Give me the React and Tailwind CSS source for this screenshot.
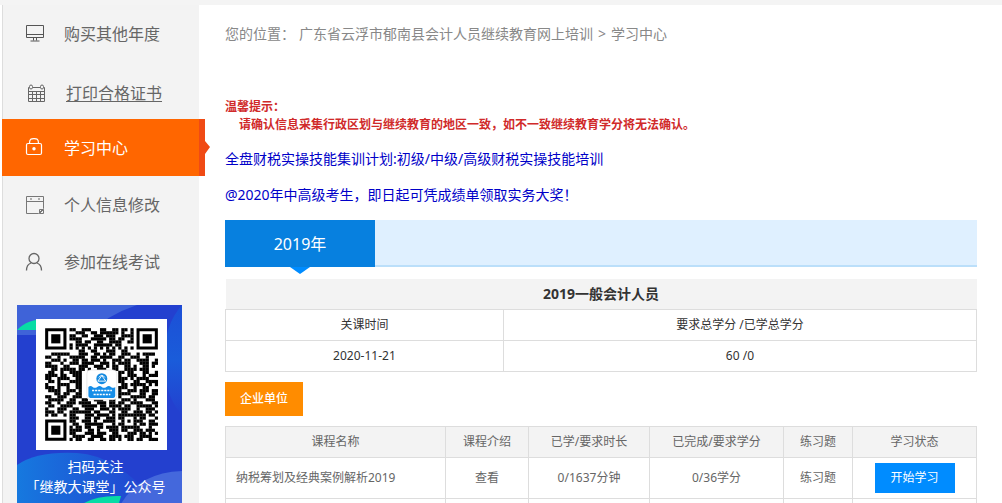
import clsx from "clsx";

const courses = [
  { name: "纳税筹划及经典案例解析2019", hours: "0/1637分钟", credits: "0/36学分" },
];

const qrRows = [
  "        ##  ###   ##  ## ## #        ",
  "          ###  ## ###### #  #        ",
  "        ##  ##  ### ###  ####        ",
  "        ####   ##### ## ##  #        ",
  "          ## ##  ##  ####  ##        ",
  "        # ####  ###### ##           ",
  "        # # # # # # # # # # #        ",
  "           ##  ##   ###  ##          ",
  "  ######   ###  ## # ##  ###  # #### ",
  "##  #   #####  ## ####  ##  ###  #   ",
  "  ### #  ## ## ### #  ### ##  ####  #",
  "##   #  ### ####  ### # ####   ### ##",
  "####  ##   ###  ### # ##  ## #  ## # ",
  "  ## ##### ## #  ###  ##  #### ###   ",
  " ##  #  ####            ## ##   ##  #",
  "#### ##  ###            #  ###  # ###",
  "##  ####  ##            ### # ####   ",
  " ## #   ####            ##   ##  ####",
  "#   ####  ##             ## ##### # #",
  "### #  #  ##            ###  #  ##   ",
  " ####  ### #            #  ### ### ##",
  "   ## ##  ##            ####   ##  ##",
  "##  ###  ###            #   ##### ## ",
  " #####  ##  ##  ###  ##  ### #   ### ",
  "##  #  ### ####  ### ## ##  ####   ##",
  " ##  ####   ##### ## #### ##  ##### #",
  "#   ###  ##  ###  ### # ####  #  ### ",
  "### ##  ####### ##   ##  ##  ### ## #",
  "# ##  # ##   ### #### # ######### ## ",
  "        ###  ## ##  ### ##   # ##   #",
  "        ##  ### #  ####  # # ###  ## ",
  "         ##  ######   # ##   # ## ###",
  "        # ## ##  ## #### ######   #  ",
  "        ####  ## #   ### ##  ### ### ",
  "        ##   ### ###  ##   ### ## # #",
  "         ####  ####  #### ###  ####  ",
  "        # ##  ##  ## ## #  ## ##  ###",
];

function MonitorIcon() {
  return (
    <svg width="20" height="20" viewBox="0 0 20 20" fill="none" stroke="#555" strokeWidth="1">
      <path d="M2.500 1.500h17v12h-17zM2.500 10.500h17M9.500 13.500v3M12.500 13.500v3M6.500 17h9" />
    </svg>
  );
}

function CalendarIcon() {
  return (
    <svg width="20" height="20" viewBox="0 0 20 20" fill="none" stroke="#666" strokeWidth="1">
      <path d="M3.500 4.500h-1v14h16v-14h-1M6.500 4.500h8M2.500 8.500h16M2.500 11.500h16M2.500 15.500h16M6.500 8.500v10M10.500 8.500v10M14.500 8.500v10" />
      <rect x="3.500" y="2" width="3" height="4" rx="1.500" />
      <rect x="14.500" y="2" width="3" height="4" rx="1.500" />
    </svg>
  );
}

function LockIcon() {
  return (
    <svg width="20" height="20" viewBox="0 0 20 20" fill="none" stroke="#fff" strokeWidth="1.200">
      <rect x="2.500" y="5.500" width="15" height="11" rx="1.500" />
      <path d="M5.500 5.500c0-5 2-4.800 4.500-4.800s4.500-.2 4.500 4.800" />
      <circle cx="10" cy="10.800" r="1.700" fill="#fff" stroke="none" />
    </svg>
  );
}

function NoteIcon() {
  return (
    <svg width="20" height="20" viewBox="0 0 20 20" fill="none" stroke="#777" strokeWidth="1">
      <path d="M2.500 1.500h17v12l-5 5h-12zM2.500 6.500h17M15.500 18.500v-4h4v4h-4l4-4" />
      <path d="M7 3.300v1.500M15 3.300v1.500" strokeWidth="1.500" />
    </svg>
  );
}

function UserIcon() {
  return (
    <svg width="20" height="20" viewBox="0 0 20 20" fill="none" stroke="#666" strokeWidth="1.300">
      <circle cx="10" cy="6.500" r="5" />
      <path d="M7 11c-3 1-4.500 4-4.500 7.500M13 11c3 1 4.500 4 4.500 7.500" />
    </svg>
  );
}

const menu = [
  { label: "购买其他年度", icon: MonitorIcon },
  { label: "打印合格证书", icon: CalendarIcon, underline: true },
  { label: "学习中心", icon: LockIcon, active: true },
  { label: "个人信息修改", icon: NoteIcon },
  { label: "参加在线考试", icon: UserIcon },
];

function MenuItem({ label, icon: Icon, active, underline }) {
  return (
    <li>
      <a
        href="#"
        className={clsx(
          "relative flex h-[57px] items-center gap-5 text-base",
          underline ? "pt-1 pl-6" : "pl-[22px]",
          active ? "bg-[#ff6600] text-white" : "text-[#666]"
        )}
      >
        <Icon />
        <span className={clsx(underline && "underline underline-offset-2")}>{label}</span>
        {active && (
          <svg className="absolute top-0 left-full" width="12" height="57" viewBox="0 0 12 57">
            <path d="M0 0h6v22l5 6-5 7v22H0z" fill="#f04a14" />
          </svg>
        )}
      </a>
    </li>
  );
}

function Finder({ x, y }) {
  return (
    <g>
      <path d={`M${x} ${y}h7v7h-7zM${x + 1} ${y + 1}v5h5v-5z`} fillRule="evenodd" />
      <rect x={x + 2} y={y + 2} width="3" height="3" />
    </g>
  );
}

function QrCode() {
  return (
    <svg className="block bg-white" width="131" height="131" viewBox="-3 -3 43 43" role="img" aria-label="继教大课堂公众号">
      {qrRows.map((row, y) =>
        [...row].map((c, x) => c === "#" && <rect key={`${x}-${y}`} x={x} y={y} width="1.050" height="1.050" />)
      )}
      <Finder x={0} y={0} />
      <Finder x={30} y={0} />
      <Finder x={0} y={30} />
      <rect x="13.700" y="13.700" width="9.800" height="9.800" rx="1.200" fill="#fff" stroke="#ddd" strokeWidth="0.200" />
      <circle cx="18.600" cy="16.600" r="1.800" fill="#168be0" />
      <path d="M17.300 17.400l1.300-1.800 1.300 1.800zM17.600 16.200q1-1.400 2 0" fill="none" stroke="#fff" strokeWidth="0.300" />
      <path d="M14.200 19.300q.7-.6 1.400 0t1.500 0 1.500 0 1.500 0 1.500 0 1.400 0v3q0 .6-.6.6h-7.600q-.6 0-.6-.6z" fill="#168ee8" />
      <path d="M15.400 20.500h6.500M15.900 21.800h5.500" stroke="#fff" strokeWidth="0.500" strokeDasharray="0.700 0.300" />
    </svg>
  );
}

function QrCard() {
  return (
    <div className="relative mt-[15px] mr-[17px] ml-[15px] h-[220px] overflow-hidden bg-[#2340cf]">
      <svg className="absolute inset-0 h-full w-full" viewBox="0 0 165 220" preserveAspectRatio="none">
        <defs>
          <linearGradient id="edge" x1="0" y1="0" x2="0" y2="1">
            <stop offset="0" stopColor="#1c4fd6" />
            <stop offset="0.5" stopColor="#1a5cda" />
            <stop offset="1" stopColor="#2340cf" />
          </linearGradient>
          <linearGradient id="wave" x1="0" y1="0" x2="1" y2="0">
            <stop offset="0" stopColor="#1679df" />
            <stop offset="1" stopColor="#2340cf" />
          </linearGradient>
        </defs>
        <path d="M0 0h120q-30 10-50 30H0z" fill="#3f63d8" />
        <path d="M0 25q10-11 30-11v11z" fill="#08dca5" />
        <path d="M165 0v110q-18-20-18-55t18-55z" fill="url(#edge)" />
        <path d="M0 160q20-14 60-12t80 50l-20 22H0z" fill="url(#wave)" />
        <path d="M165 166q-55 2-70 54h70z" fill="#4468dc" />
        <path d="M64 200q14-10 40-9l-8 29H60z" fill="#08dca5" />
      </svg>
      <div className="relative pt-[14px] text-sm leading-5 text-white">
        <div className="pl-[19px]">
          <QrCode />
        </div>
        <p className="mt-[7px] pr-2 text-center">扫码关注</p>
        <p className="pr-2 text-center">「继教大课堂」公众号</p>
      </div>
    </div>
  );
}

function Sidebar() {
  return (
    <aside className="ml-[2px] w-[197px] shrink-0 bg-[#f3f3f3] shadow-[inset_1px_0_0_#ddd]">
      <ul>
        {menu.map((item) => (
          <MenuItem key={item.label} {...item} />
        ))}
      </ul>
      <QrCard />
    </aside>
  );
}

function SummaryTable() {
  return (
    <table className="mt-3 w-full table-fixed border-collapse text-center text-xs text-[#333]">
      <colgroup>
        <col className="w-[37%]" />
        <col />
      </colgroup>
      <thead>
        <tr className="h-[30px] bg-[#f3f3f3]">
          <th colSpan={2} className="text-sm font-bold">2019一般会计人员</th>
        </tr>
      </thead>
      <tbody>
        <tr className="h-[31px]">
          <td className="border border-[#ddd] pt-px">关课时间</td>
          <td className="border border-[#ddd] pt-px">要求总学分 /已学总学分</td>
        </tr>
        <tr className="h-[31px]">
          <td className="border border-[#ddd] pt-px">2020-11-21</td>
          <td className="border border-[#ddd] pt-px">60 /0</td>
        </tr>
      </tbody>
    </table>
  );
}

function CourseTable() {
  return (
    <table className="mt-[10px] w-full table-fixed border-collapse text-center text-xs text-[#666]">
      <thead>
        <tr className="h-[31px] bg-[#f3f3f3]">
          <th className="border border-[#ddd] font-normal">课程名称</th>
          <th className="w-[83px] border border-[#ddd] font-normal">课程介绍</th>
          <th className="w-[121px] border border-[#ddd] font-normal">已学/要求时长</th>
          <th className="w-[134px] border border-[#ddd] font-normal">已完成/要求学分</th>
          <th className="w-[69px] border border-[#ddd] font-normal">练习题</th>
          <th className="w-[124px] border border-[#ddd] font-normal">学习状态</th>
        </tr>
      </thead>
      <tbody>
        {courses.map((c) => (
          <tr key={c.name} className="h-[41px]">
            <td className="border border-[#ddd] pl-[10px] text-left">{c.name}</td>
            <td className="border border-[#ddd]"><a href="#">查看</a></td>
            <td className="border border-[#ddd]">{c.hours}</td>
            <td className="border border-[#ddd]">{c.credits}</td>
            <td className="border border-[#ddd]"><a href="#">练习题</a></td>
            <td className="border border-[#ddd]">
              <button className="mx-auto block h-[30px] w-20 bg-[#008cff] text-white">开始学习</button>
            </td>
          </tr>
        ))}
        <tr className="h-[41px]">
          <td className="border border-[#ddd]" />
          <td className="border border-[#ddd]" />
          <td className="border border-[#ddd]" />
          <td className="border border-[#ddd]" />
          <td className="border border-[#ddd]" />
          <td className="border border-[#ddd]" />
        </tr>
      </tbody>
    </table>
  );
}

export default function App() {
  return (
    <div className="h-screen overflow-hidden bg-white pt-[5px] shadow-[inset_0_5px_0_#f4f4f4] font-['Noto_Sans','Noto_Sans_CJK_SC',sans-serif]">
      <div className="flex">
        <Sidebar />
        <main className="min-w-0 flex-1 pr-[25px] pl-[26px]">
          <nav className="flex h-[57px] items-center text-sm text-[#888]">
            <span>您的位置：</span>
            <a href="#" className="ml-1">广东省云浮市郁南县会计人员继续教育网上培训</a>
            <span className="mx-[5px]">&gt;</span>
            <a href="#">学习中心</a>
          </nav>

          <div className="mt-9 text-xs leading-[18px] font-bold text-[#d02a2a]">
            <p>温馨提示：</p>
            <p className="pl-[14px]">请确认信息采集行政区划与继续教育的地区一致，如不一致继续教育学分将无法确认。</p>
          </div>

          <div className="mt-[7px] text-sm leading-9 text-[#0000c8]">
            <a href="#" className="block">全盘财税实操技能集训计划:初级/中级/高级财税实操技能培训</a>
            <a href="#" className="block">@2020年中高级考生，即日起可凭成绩单领取实务大奖！</a>
          </div>

          {/* Year tabs */}
          <div className="mt-[7px] flex h-[47px] bg-[#dff0ff] shadow-[inset_0_-2px_0_#bbdffa]">
            <button className="relative w-[150px] bg-[#0780df] text-base text-white">
              2019年
              <svg className="absolute top-full left-1/2 -translate-x-1/2" width="20" height="7" viewBox="0 0 20 7">
                <path d="M0 0h20L10 7z" fill="#008cff" />
              </svg>
            </button>
          </div>

          <SummaryTable />

          <button className="mt-[10px] block h-[34px] w-[78px] bg-[#ff8c00] text-xs font-medium text-white">企业单位</button>

          <CourseTable />
        </main>
      </div>
    </div>
  );
}
